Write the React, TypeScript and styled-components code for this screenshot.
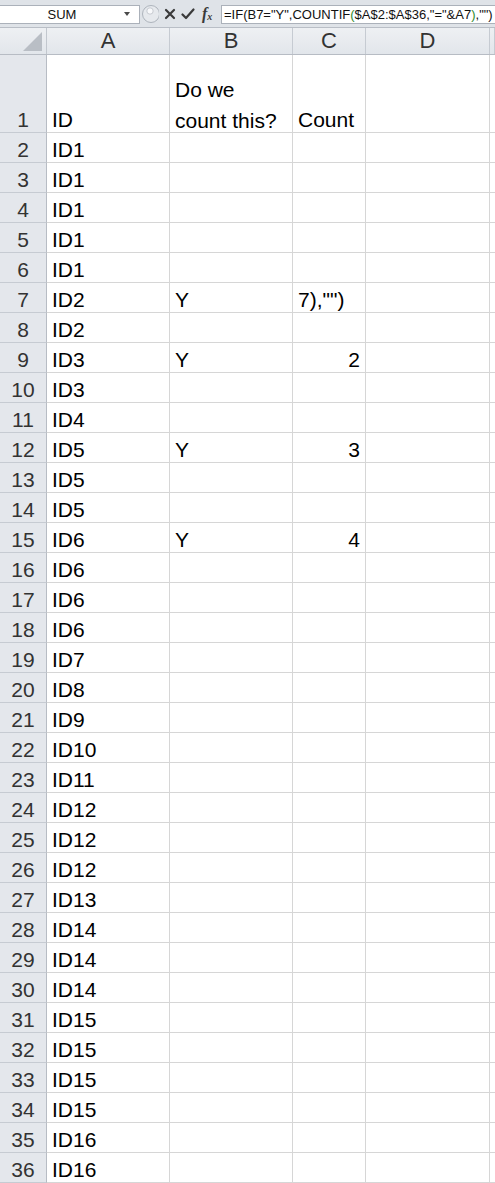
import styled, { createGlobalStyle } from "styled-components";

// Page reset
const GlobalStyle = createGlobalStyle`
  html, body {
    margin: 0;
    padding: 0;
    background: #ffffff;
  }
  body {
    font-family: "Liberation Sans", Arial, sans-serif;
    overflow: hidden;
  }
`;

// Column widths: row header, A, B, C, D, rest
const COLUMNS = "47px 123px 123px 73px 124px 1fr";

// Sheet data, one entry per row
interface RowData {
  a: string;
  b?: string;
  c?: string;
  editing?: boolean;
}

const ids = [
  "ID1", "ID1", "ID1", "ID1", "ID1", "ID2", "ID2", "ID3", "ID3", "ID4",
  "ID5", "ID5", "ID5", "ID6", "ID6", "ID6", "ID6", "ID7", "ID8", "ID9",
  "ID10", "ID11", "ID12", "ID12", "ID12", "ID13", "ID14", "ID14", "ID14",
  "ID15", "ID15", "ID15", "ID15", "ID16", "ID16",
];

const extras: Record<number, Partial<RowData>> = {
  7: { b: "Y", c: '7),"")', editing: true },
  9: { b: "Y", c: "2" },
  12: { b: "Y", c: "3" },
  15: { b: "Y", c: "4" },
};

const rows: RowData[] = ids.map((id, i) => ({ a: id, ...extras[i + 2] }));

function App() {
  return (
    <>
      <GlobalStyle />
      <Window>
        <FormulaBar>
          <NameBox>
            <NameText>SUM</NameText>
            <DropArrow />
          </NameBox>
          <BarButtons>
            <svg width="18" height="20" viewBox="0 0 18 20">
              <circle cx="10" cy="10" r="8.5" fill="#e6e9ed" stroke="#aeb4bc" />
              <circle cx="9" cy="7" r="3.2" fill="#f8f9fb" stroke="#c6cad0" />
            </svg>
            <svg width="12" height="12" viewBox="0 0 12 12">
              <path d="M2 2 L10 10 M10 2 L2 10" stroke="#3a3a3a" strokeWidth="2.2" strokeLinecap="round" />
            </svg>
            <svg width="14" height="12" viewBox="0 0 14 12">
              <path d="M1.5 6.5 L5 10 L12.5 1.5" stroke="#3a3a3a" strokeWidth="2.2" fill="none" strokeLinecap="round" strokeLinejoin="round" />
            </svg>
            <FxLabel>
              f<sub>x</sub>
            </FxLabel>
          </BarButtons>
          <FormulaInput>
            =IF(B7="Y",COUNTIF<Paren>(</Paren>$A$2:$A$36,"="&amp;A7<Paren>)</Paren>,"")
          </FormulaInput>
        </FormulaBar>

        <HeaderRow>
          <Corner>
            <CornerMark />
          </Corner>
          <ColumnHead>A</ColumnHead>
          <ColumnHead>B</ColumnHead>
          <ColumnHead>C</ColumnHead>
          <ColumnHead>D</ColumnHead>
          <ColumnHead />
        </HeaderRow>

        <Row tall>
          <RowHead>1</RowHead>
          <Cell>ID</Cell>
          <Cell>
            <Wrapped>
              Do we
              <br />
              count this?
            </Wrapped>
          </Cell>
          <Cell>Count</Cell>
          <Cell />
          <Cell />
        </Row>

        {rows.map((row, i) => (
          <Row key={i}>
            <RowHead>{i + 2}</RowHead>
            <Cell>{row.a}</Cell>
            <Cell>{row.b}</Cell>
            <Cell align={row.editing ? "left" : "right"}>{row.c}</Cell>
            <Cell />
            <Cell />
          </Row>
        ))}
      </Window>
    </>
  );
}
export default App;

// Whole spreadsheet window
const Window = styled.div`
  width: 495px;
  height: 1183px;
  overflow: hidden;
  background: #ffffff;
`;

// Name box + buttons + formula field
const FormulaBar = styled.div`
  height: 28px;
  box-sizing: border-box;
  display: flex;
  align-items: center;
  background: #dfe3e8;
  border-bottom: 1px solid #b9bec6;
  padding-top: 1px;
`;

const NameBox = styled.div`
  flex: 0 0 140px;
  height: 19px;
  box-sizing: border-box;
  background: #ffffff;
  border: 1px solid #abb1ba;
  border-left: none;
  display: flex;
  align-items: center;
`;

const NameText = styled.span`
  width: 124px;
  text-align: center;
  font-size: 13px;
  color: #111;
`;

const DropArrow = styled.span`
  width: 0;
  height: 0;
  border-left: 3.5px solid transparent;
  border-right: 3.5px solid transparent;
  border-top: 4px solid #4a4a4a;
`;

const BarButtons = styled.div`
  flex: 0 0 81px;
  height: 100%;
  display: flex;
  align-items: center;
  gap: 5px;
  padding-left: 1px;
  box-sizing: border-box;
`;

const FxLabel = styled.span`
  font-family: "Liberation Serif", "Times New Roman", serif;
  font-style: italic;
  font-weight: bold;
  font-size: 16px;
  color: #3a3a3a;
  line-height: 1;
  margin-left: 2px;
  sub {
    font-size: 10px;
    vertical-align: -1px;
  }
`;

const FormulaInput = styled.div`
  flex: 1 1 0;
  min-width: 0;
  height: 19px;
  box-sizing: border-box;
  background: #ffffff;
  border: 1px solid #abb1ba;
  border-right: none;
  font-size: 13px;
  line-height: 17px;
  padding-left: 2px;
  white-space: nowrap;
  overflow: hidden;
  color: #111;
`;

const Paren = styled.span`
  color: #2e8b2e;
`;

// Column letters row
const HeaderRow = styled.div`
  display: grid;
  grid-template-columns: ${COLUMNS};
  height: 27px;
  box-sizing: border-box;
  background: linear-gradient(#eef0f3, #e2e6eb);
  border-bottom: 1px solid #b7bcc4;
`;

const Corner = styled.div`
  border-right: 1px solid #c2c7ce;
  display: flex;
  align-items: flex-end;
  justify-content: flex-end;
  padding: 0 4px 3px 0;
`;

const CornerMark = styled.span`
  width: 0;
  height: 0;
  border-left: 19px solid transparent;
  border-bottom: 19px solid #b9bec5;
`;

const ColumnHead = styled.div`
  border-right: 1px solid #c6cbd2;
  text-align: center;
  font-size: 22px;
  line-height: 26px;
  color: #333;
`;

// One sheet row
const Row = styled.div<{ tall?: boolean }>`
  display: grid;
  grid-template-columns: ${COLUMNS};
  height: ${(p) => (p.tall ? "78px" : "30px")};
`;

const RowHead = styled.div`
  background: #e4e7ec;
  border-right: 1px solid #b7bcc4;
  border-bottom: 1px solid #c6cbd2;
  display: flex;
  align-items: flex-end;
  justify-content: center;
  font-size: 21px;
  line-height: 24px;
  color: #333;
`;

const Cell = styled.div<{ align?: "left" | "right" }>`
  border-right: 1px solid #d6d6d6;
  border-bottom: 1px solid #d6d6d6;
  display: flex;
  align-items: flex-end;
  justify-content: ${(p) => (p.align === "right" ? "flex-end" : "flex-start")};
  padding: 0 5px 0 5px;
  font-size: 21px;
  line-height: 24px;
  color: #000;
  white-space: nowrap;
  overflow: hidden;
`;

const Wrapped = styled.span`
  line-height: 31px;
  margin-bottom: -4px;
`;
